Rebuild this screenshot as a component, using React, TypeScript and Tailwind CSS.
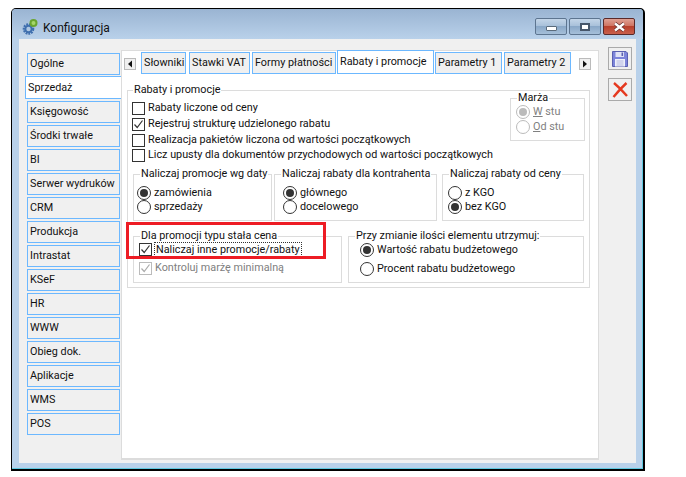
import type { ReactNode } from 'react'

const SIDE_TABS = ['Księgowość', 'Środki trwałe', 'BI', 'Serwer wydruków', 'CRM', 'Produkcja', 'Intrastat', 'KSeF', 'HR', 'WWW', 'Obieg dok.', 'Aplikacje', 'WMS', 'POS']

const TAB = 'flex items-center border border-[#6cb8ff] pl-[2px]'

function Check({ checked, disabled }: { checked?: boolean; disabled?: boolean }) {
  const border = disabled ? 'border-[#bbbbbb]' : 'border-[#333333]'
  const tick = disabled ? '#aaaaaa' : '#333333'
  return (
    <span className={`flex h-[13px] w-[13px] shrink-0 items-center justify-center border bg-white ${border}`}>
      {checked && (
        <svg width="11" height="11" viewBox="0 0 11 11" fill="none">
          <path d="M1.5 5.5 L4.2 8.5 L9.5 1.5" stroke={tick} strokeWidth="1.2" />
        </svg>
      )}
    </span>
  )
}

function CheckRow({ label, checked, disabled, className = '' }: { label: string; checked?: boolean; disabled?: boolean; className?: string }) {
  return (
    <div className={`flex h-[16px] items-center gap-[3px] ${className}`}>
      <Check checked={checked} disabled={disabled} />
      <span className={disabled ? 'text-[#808080]' : ''}>{label}</span>
    </div>
  )
}

function Radio({ label, checked, disabled, className = '' }: { label: ReactNode; checked?: boolean; disabled?: boolean; className?: string }) {
  return (
    <div className={`flex h-[14px] items-center gap-[3px] ${className}`}>
      <span className={`flex h-[14px] w-[14px] shrink-0 items-center justify-center rounded-full border bg-white ${disabled ? 'border-[#bbbbbb]' : 'border-[#333333]'}`}>
        {checked && <span className={`h-[8px] w-[8px] rounded-full ${disabled ? 'bg-[#bbbbbb]' : 'bg-[#333333]'}`} />}
      </span>
      <span className={disabled ? 'text-[#808080]' : ''}>{label}</span>
    </div>
  )
}

function Group({ title, className, inner, children }: { title: string; className: string; inner: string; children: ReactNode }) {
  return (
    <fieldset className={`min-w-0 border border-[#dcdcdc] ${className}`}>
      <legend className="ml-[6px] h-[14px] px-[1px] leading-[14px]">{title}</legend>
      <div className={inner}>{children}</div>
    </fieldset>
  )
}

function ScrollBtn({ dir }: { dir: 'l' | 'r' }) {
  return (
    <span className="flex h-[12px] w-[12px] items-center justify-center border border-[#bbbbbb] bg-[#f0f0f0]">
      <svg width="6" height="8" viewBox="0 0 6 8">
        <path d={dir === 'l' ? 'M5 0.5 L1 4 L5 7.5 Z' : 'M1 0.5 L5 4 L1 7.5 Z'} fill="#111111" />
      </svg>
    </span>
  )
}

function WinBtn({ className, children }: { className: string; children: ReactNode }) {
  return <span className={`flex h-[17px] w-[32px] items-center justify-center rounded-[2px] border ${className}`}>{children}</span>
}

const BLUE_BTN = 'border-[#5d7590] bg-[linear-gradient(#c3d5e8_0%,#a9c1da_45%,#8aa8c8_50%,#a5bfd9_100%)]'

export default function App() {
  return (
    <div className="relative h-[477px] w-[686px] whitespace-nowrap bg-white pl-[11px] pt-[8px] text-[10.8px] leading-[14px] text-[#111111] [font-family:Roboto,sans-serif]">
      <div className="flex h-[463px] w-[634px] flex-col rounded-t-[5px] border border-b-2 border-r-2 border-black bg-[#b9d1ea] shadow-[inset_-1px_-1px_0_#5fc8e0]">
        {/* Title bar */}
        <div className="flex h-[30px] shrink-0 rounded-t-[4px] bg-gradient-to-b from-[#9ab4d2] to-[#b9d1ea] pl-[10px] pr-[8px]">
          <svg className="mt-[10px]" width="16" height="16" viewBox="0 0 16 16">
            <circle cx="6.5" cy="10" r="4.6" fill="none" stroke="#3f6fae" strokeWidth="2.4" strokeDasharray="1.8 0.9" />
            <circle cx="6.5" cy="10" r="3.2" fill="none" stroke="#3f6fae" strokeWidth="2" />
            <circle cx="11.5" cy="4" r="3" fill="#a5d66a" stroke="#6aa52f" strokeWidth="2" />
          </svg>
          <span className="ml-[5px] mt-[12px] self-start text-[12px]">Konfiguracja</span>
          <div className="ml-auto flex gap-[2px] self-start pt-[9px]">
            <WinBtn className={BLUE_BTN}>
              <span className="mt-[3px] h-[5px] w-[11px] rounded-[1px] border border-[#5a6b7c] bg-white" />
            </WinBtn>
            <WinBtn className={BLUE_BTN}>
              <span className="h-[8px] w-[10px] border-2 border-[#46566a] bg-white" />
            </WinBtn>
            <WinBtn className="border-[#5a2a2a] bg-[linear-gradient(#dfa093_0%,#cf7563_45%,#b8402c_50%,#c9604c_100%)]">
              <svg width="13" height="10" viewBox="0 0 13 10">
                <path d="M2 1.5 L11 8.5 M11 1.5 L2 8.5" stroke="#5a2a2a" strokeWidth="3.6" />
                <path d="M2 1.5 L11 8.5 M11 1.5 L2 8.5" stroke="#ffffff" strokeWidth="2.4" />
              </svg>
            </WinBtn>
          </div>
        </div>

        {/* Client area */}
        <div className="mx-[7px] flex h-[424px] shrink-0 bg-[#f0f0f0] pt-[8px]">
          {/* Side tabs */}
          <div className="flex w-[102px] shrink-0 flex-col items-end pt-[6px]">
            <div className={`mr-[1px] h-[22px] w-[93px] ${TAB}`}>Ogólne</div>
            <div className="relative z-10 mt-[1px] flex h-[23px] w-[96px] items-center border border-r-0 border-[#6cb8ff] bg-white pl-[2px]">Sprzedaż</div>
            <div className="mr-[1px] mt-[2px] flex flex-col gap-[2px]">
              {SIDE_TABS.map(t => (
                <div key={t} className={`h-[22px] w-[93px] ${TAB}`}>{t}</div>
              ))}
            </div>
          </div>

          {/* Main panel */}
          <div className="mt-[3px] flex h-[410px] w-[478px] shrink-0 flex-col border border-b-2 border-[#dcdcdc] bg-white">
            <div className="flex h-[23px] shrink-0 items-start">
              <div className="ml-[2px] mt-[7px]"><ScrollBtn dir="l" /></div>
              <div className={`ml-[5px] mt-[1px] h-[22px] w-[45px] bg-[#f0f0f0] ${TAB}`}>Słowniki</div>
              <div className={`ml-[3px] mt-[1px] h-[22px] w-[61px] bg-[#f0f0f0] ${TAB}`}>Stawki VAT</div>
              <div className={`ml-[2px] mt-[1px] h-[22px] w-[84px] bg-[#f0f0f0] ${TAB}`}>Formy płatności</div>
              <div className={`relative z-10 -mt-[1px] ml-[1px] h-[24px] w-[97px] bg-white ${TAB}`}>Rabaty i promocje</div>
              <div className={`ml-[1px] mt-[1px] h-[22px] w-[67px] bg-[#f0f0f0] ${TAB}`}>Parametry 1</div>
              <div className={`ml-[2px] mt-[1px] h-[22px] w-[67px] bg-[#f0f0f0] ${TAB}`}>Parametry 2</div>
              <div className="ml-[8px] mt-[7px]"><ScrollBtn dir="r" /></div>
            </div>

            {/* Tab page */}
            <fieldset className="relative ml-[5px] mt-[9px] h-[205px] w-[463px] min-w-0 border border-[#dcdcdc] px-[4px]">
              <legend className="ml-[1px] h-[14px] px-[1px] leading-[14px]">Rabaty i promocje</legend>
              <CheckRow label="Rabaty liczone od ceny" className="mt-[3px]" />
              <CheckRow label="Rejestruj strukturę udzielonego rabatu" checked />
              <CheckRow label="Realizacja pakietów liczona od wartości początkowych" />
              <CheckRow label="Licz upusty dla dokumentów przychodowych od wartości początkowych" className="-mt-[1px]" />
              <Group title="Marża" className="absolute left-[382px] top-[-6px] h-[50px] w-[75px]" inner="pl-[5px]">
                <Radio label={<><span className="underline">W</span> stu</>} checked disabled />
                <Radio label={<><span className="underline">O</span>d stu</>} disabled className="mt-[1px]" />
              </Group>

              <div className="ml-[1px] mt-[4px] flex">
                <Group title="Naliczaj promocje wg daty" className="h-[54px] w-[139px]" inner="pl-[3px] pt-[5px]">
                  <Radio label="zamówienia" checked />
                  <Radio label="sprzedaży" />
                </Group>
                <Group title="Naliczaj rabaty dla kontrahenta" className="ml-[2px] h-[54px] w-[163px]" inner="pl-[8px] pt-[5px]">
                  <Radio label="głównego" checked />
                  <Radio label="docelowego" />
                </Group>
                <Group title="Naliczaj rabaty od ceny" className="ml-[5px] h-[54px] w-[142px]" inner="pl-[5px] pt-[5px]">
                  <Radio label="z KGO" />
                  <Radio label="bez KGO" checked />
                </Group>
              </div>
              <div className="ml-[1px] mt-[8px] flex">
                <Group title="Dla promocji typu stała cena" className="h-[54px] w-[209px]" inner="pl-[5px]">
                  <div className="-mt-[1px] flex h-[15px] items-center gap-[2px]">
                    <Check checked />
                    <span className="flex h-[15px] items-center border border-dotted border-[#333333] px-[1px]">Naliczaj inne promocje/rabaty</span>
                  </div>
                  <CheckRow label="Kontroluj marżę minimalną" checked disabled className="mt-[3px]" />
                </Group>
                <Group title="Przy zmianie ilości elementu utrzymuj:" className="ml-[6px] h-[54px] w-[236px]" inner="pl-[11px]">
                  <Radio label="Wartość rabatu budżetowego" checked />
                  <Radio label="Procent rabatu budżetowego" className="mt-[5px]" />
                </Group>
              </div>
            </fieldset>
          </div>

          {/* Toolbar */}
          <div className="ml-[9px] flex flex-col gap-[8px]">
            <button className="flex h-[23px] w-[24px] items-center justify-center border border-[#aaaaaa]">
              <svg width="16" height="16" viewBox="0 0 16 16">
                <path d="M0.5 0.5 H14 L15.5 2 V15.5 H0.5 Z" fill="#7c84da" stroke="#5a60b0" />
                <rect x="3.5" y="1" width="8.5" height="5" fill="#dfe2f6" />
                <rect x="9.5" y="1.5" width="1.6" height="3.5" fill="#5a60b0" />
                <rect x="3" y="8" width="10" height="7.5" fill="#eef0fa" />
                <path d="M4.5 10 H11.5 M4.5 12 H11.5 M4.5 14 H11.5" stroke="#b4b8e0" />
              </svg>
            </button>
            <button className="flex h-[23px] w-[24px] items-center justify-center border border-[#aaaaaa]">
              <svg width="16" height="16" viewBox="0 0 16 16">
                <path d="M2 1 Q8 6 15 14 M14.5 1 Q8 7 1.5 15" fill="none" stroke="#e5391f" strokeWidth="2.4" />
              </svg>
            </button>
          </div>
        </div>
      </div>

      {/* Red annotation */}
      <div className="absolute left-[126px] top-[222px] h-[37px] w-[200px] border-[3px] border-[#ed1c24]" />
    </div>
  )
}
